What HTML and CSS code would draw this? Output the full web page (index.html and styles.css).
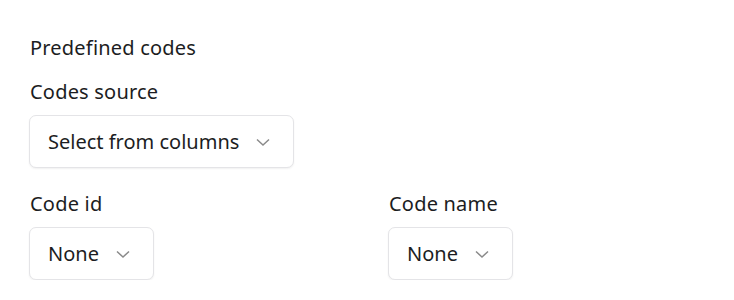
FILE: index.html
```html
<!DOCTYPE html>
<html>
<head>
<meta charset="utf-8">
<link rel="stylesheet" href="styles.css">
</head>
<body>
<div class="panel">
  <div class="section-title">Predefined codes</div>
  <div class="field">
    <div class="label">Codes source</div>
    <button class="select"><span>Select from columns</span>
      <svg class="chev" width="16" height="16" viewBox="0 0 16 16"><path d="M2 5.5 L8 11 L14 5.5" fill="none" stroke="#8a8a8a" stroke-width="1.5"/></svg>
    </button>
  </div>
  <div class="row">
    <div class="field">
      <div class="label">Code id</div>
      <button class="select"><span>None</span>
        <svg class="chev" width="16" height="16" viewBox="0 0 16 16"><path d="M2 5.5 L8 11 L14 5.5" fill="none" stroke="#8a8a8a" stroke-width="1.5"/></svg>
      </button>
    </div>
    <div class="field">
      <div class="label">Code name</div>
      <button class="select"><span>None</span>
        <svg class="chev" width="16" height="16" viewBox="0 0 16 16"><path d="M2 5.5 L8 11 L14 5.5" fill="none" stroke="#8a8a8a" stroke-width="1.5"/></svg>
      </button>
    </div>
  </div>
</div>
</body>
</html>
```
FILE: styles.css
```css
* { box-sizing: border-box; }
body {
  margin: 0;
  background: #fff;
  font-family: "Noto Sans", sans-serif;
  color: #1c1d22;
}
.panel {
  padding: 34px 30px 0 30px;
  display: flex;
  flex-direction: column;
}
.section-title {
  font-size: 20px;
  letter-spacing: 0.2px;
  line-height: 28px;
  margin-bottom: 16px;
}
.field {
  display: flex;
  flex-direction: column;
  align-items: flex-start;
}
.label {
  font-size: 20px;
  letter-spacing: 0.2px;
  line-height: 28px;
  margin-bottom: 9px;
}
.select {
  display: flex;
  align-items: center;
  gap: 16px;
  height: 53px;
  padding: 0 22px 0 18px;
  margin-left: -1px;
  border: 1px solid #e4e4e7;
  border-radius: 7px;
  background: #fff;
  box-shadow: 0 1px 2px rgba(0,0,0,0.06);
  font-family: inherit;
  font-size: 20px;
  color: #1c1d22;
}
.chev { display: block; }
.row {
  display: grid;
  grid-template-columns: 359px auto;
  margin-top: 22px;
}
```
